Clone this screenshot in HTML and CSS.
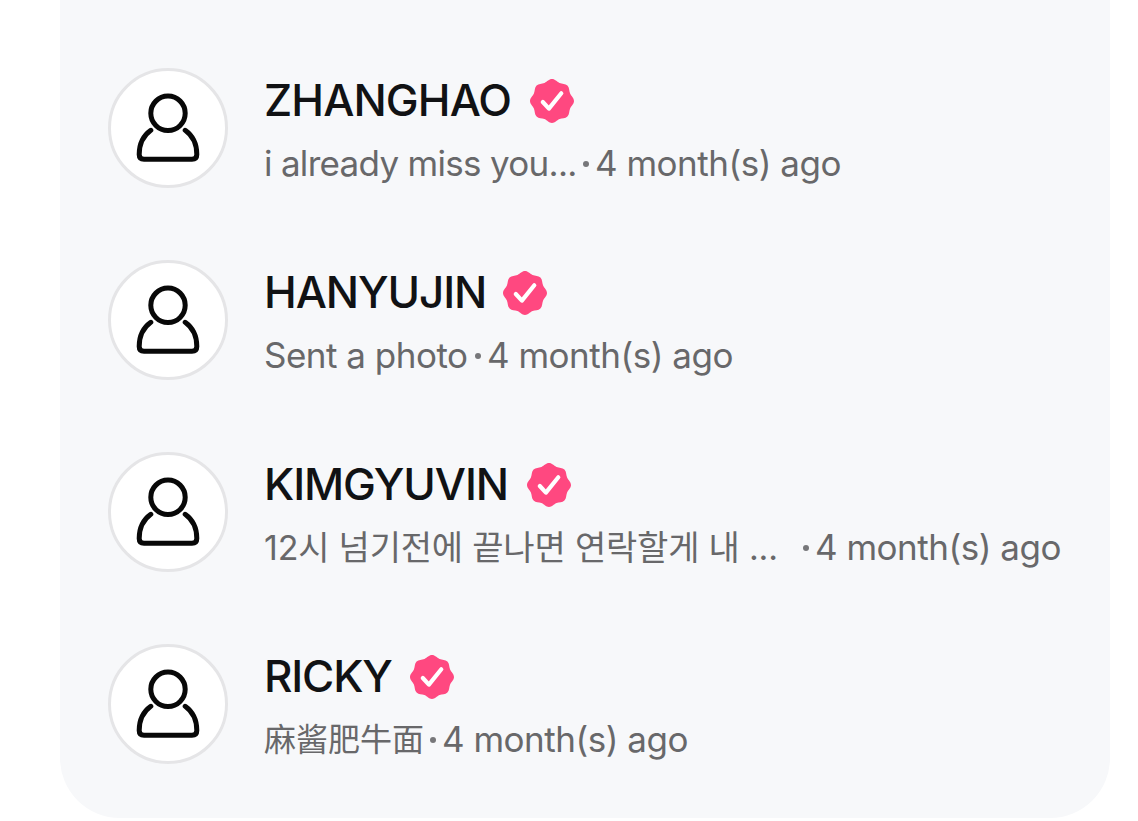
FILE: index.html
```html
<!DOCTYPE html>
<html lang="en">
<head>
    <meta charset="UTF-8">
    <meta name="viewport" content="width=device-width, initial-scale=1.0">
    <title>Messages</title>
    <link rel="stylesheet" href="styles.css">
</head>
<body>
    <svg class="sprite" aria-hidden="true">
        <symbol id="person" viewBox="0 0 120 120">
            <circle cx="60" cy="45.300" r="17.200"/>
            <path d="M42.800 62.300C35.500 67.500 31.200 76 31.200 86.500Q31.200 91.200 36 91.200H84Q88.800 91.200 88.800 86.500C88.800 76 84.500 67.500 77.200 62.300"/>
        </symbol>
        <symbol id="verified" viewBox="0 0 44 44">
            <path class="seal" d="M22 0C25.200 0 26.600 2.600 29.500 3.900C32.400 5.100 35.200 4.400 37.400 6.600C39.600 8.800 38.900 11.600 40.100 14.500C41.400 17.400 44 18.800 44 22C44 25.200 41.400 26.600 40.100 29.500C38.900 32.400 39.600 35.200 37.400 37.400C35.200 39.600 32.400 38.900 29.500 40.100C26.600 41.400 25.200 44 22 44C18.800 44 17.400 41.400 14.500 40.100C11.600 38.900 8.800 39.600 6.600 37.400C4.400 35.200 5.100 32.400 3.900 29.500C2.600 26.600 0 25.200 0 22C0 18.800 2.600 17.400 3.900 14.500C5.100 11.600 4.400 8.800 6.600 6.600C8.800 4.400 11.600 5.100 14.500 3.900C17.400 2.600 18.800 0 22 0Z"/>
            <path class="check" d="M12.800 23L18.900 29.600L31.300 14.300"/>
        </symbol>
    </svg>

    <div class="chat-list">
        <!-- Zhang Hao -->
        <div class="chat zhanghao">
            <div class="avatar"><svg><use href="#person"/></svg></div>
            <div class="info">
                <div class="name"><span>ZHANGHAO</span><svg class="badge"><use href="#verified"/></svg></div>
                <div class="message"><span class="text">i already miss you...</span><span class="dot"></span><span class="time">4 month(s) ago</span></div>
            </div>
        </div>
        <!-- Han Yujin -->
        <div class="chat hanyujin">
            <div class="avatar"><svg><use href="#person"/></svg></div>
            <div class="info">
                <div class="name"><span>HANYUJIN</span><svg class="badge"><use href="#verified"/></svg></div>
                <div class="message"><span class="text">Sent a photo</span><span class="dot"></span><span class="time">4 month(s) ago</span></div>
            </div>
        </div>
        <!-- Kim Gyuvin -->
        <div class="chat kimgyuvin">
            <div class="avatar"><svg><use href="#person"/></svg></div>
            <div class="info">
                <div class="name"><span>KIMGYUVIN</span><svg class="badge"><use href="#verified"/></svg></div>
                <div class="message"><span class="text" lang="ko">12시 넘기전에 끝나면 연락할게 내 ...</span><span class="dot"></span><span class="time">4 month(s) ago</span></div>
            </div>
        </div>
        <!-- Ricky -->
        <div class="chat ricky">
            <div class="avatar"><svg><use href="#person"/></svg></div>
            <div class="info">
                <div class="name"><span>RICKY</span><svg class="badge"><use href="#verified"/></svg></div>
                <div class="message"><span class="text" lang="zh">麻酱肥牛面</span><span class="dot"></span><span class="time">4 month(s) ago</span></div>
            </div>
        </div>
    </div>
</body>
</html>
```
FILE: styles.css
```css
* {
    box-sizing: border-box;
}
body {
    margin: 0;
    background-color: #fff;
    font-family: Inter, "Noto Sans CJK KR", sans-serif;
}
.sprite {
    display: block;
    width: 0;
    height: 0;
}
.chat-list {
    width: 1050px;
    height: 818px;
    margin-left: 60px;
    padding: 68px 48px 0;
    background-color: #f7f8fa;
    border-radius: 0 0 60px 60px;
}
.chat {
    display: flex;
    height: 192px;
}
.avatar {
    flex: none;
    width: 120px;
    height: 120px;
    border: 3px solid #e5e5e7;
    border-radius: 50%;
    background-color: #fff;
}
.avatar svg {
    display: block;
    width: 120px;
    height: 120px;
    margin: -3px;
    fill: none;
    stroke: #080808;
    stroke-width: 5;
    stroke-linecap: round;
}
.info {
    padding-left: 36px;
    white-space: nowrap;
}
.name {
    display: flex;
    align-items: center;
    height: 66px;
    color: #111214;
    font-size: 44px;
    font-weight: 450;
}
.name span {
    flex: none;
    padding-bottom: 2px;
}
.badge {
    flex: none;
    width: 44px;
    height: 44px;
    margin-left: 16px;
}
.seal {
    fill: #ff4880;
}
.check {
    fill: none;
    stroke: #fff;
    stroke-width: 4.2;
    stroke-linecap: round;
    stroke-linejoin: round;
}
.message {
    display: flex;
    align-items: center;
    height: 60px;
    color: #68686a;
    font-size: 35px;
    letter-spacing: -0.5px;
}
.text, .time {
    flex: none;
    padding-bottom: 3px;
}
.dot {
    width: 6px;
    height: 6px;
    margin: 0 6px 0 7px;
    border-radius: 50%;
    background-color: #77777a;
}

/* Name and message widths */
.zhanghao .name span {
    width: 250px;
    letter-spacing: -0.9px;
}
.zhanghao .text {
    width: 312px;
    letter-spacing: -0.7px;
}
.hanyujin .name span {
    width: 223px;
    letter-spacing: -1.1px;
}
.hanyujin .text {
    width: 204px;
}
.kimgyuvin .name span {
    width: 247px;
    letter-spacing: -1.1px;
}
.kimgyuvin .text {
    width: 532px;
    padding-bottom: 5px;
    font-size: 34px;
    letter-spacing: -0.2px;
}
.ricky .name span {
    width: 130px;
    letter-spacing: -1.2px;
}
.ricky .text {
    width: 159px;
    padding-bottom: 6px;
    font-family: "Noto Sans CJK SC", sans-serif;
    font-size: 32px;
    letter-spacing: 0;
}
```
